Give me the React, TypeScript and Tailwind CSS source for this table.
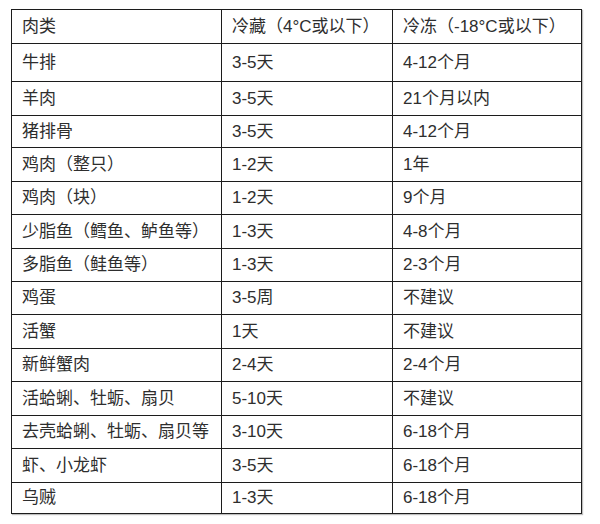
const ROWS = [
  { name: "牛排", chill: "3-5天", freeze: "4-12个月", h: "h-[38px]" },
  { name: "羊肉", chill: "3-5天", freeze: "21个月以内", h: "h-[34px]" },
  { name: "猪排骨", chill: "3-5天", freeze: "4-12个月", h: "h-[32px]" },
  { name: "鸡肉（整只）", chill: "1-2天", freeze: "1年", h: "h-[34px]" },
  { name: "鸡肉（块）", chill: "1-2天", freeze: "9个月", h: "h-[33px]" },
  { name: "少脂鱼（鳕鱼、鲈鱼等）", chill: "1-3天", freeze: "4-8个月", h: "h-[34px]" },
  { name: "多脂鱼（鲑鱼等）", chill: "1-3天", freeze: "2-3个月", h: "h-[33px]" },
  { name: "鸡蛋", chill: "3-5周", freeze: "不建议", h: "h-[33px]" },
  { name: "活蟹", chill: "1天", freeze: "不建议", h: "h-[34px]" },
  { name: "新鲜蟹肉", chill: "2-4天", freeze: "2-4个月", h: "h-[33px]" },
  { name: "活蛤蜊、牡蛎、扇贝", chill: "5-10天", freeze: "不建议", h: "h-[34px]" },
  { name: "去壳蛤蜊、牡蛎、扇贝等", chill: "3-10天", freeze: "6-18个月", h: "h-[33px]" },
  { name: "虾、小龙虾", chill: "3-5天", freeze: "6-18个月", h: "h-[34px]" },
  { name: "乌贼", chill: "1-3天", freeze: "6-18个月", h: "h-[31px]" },
];

const cell = "border-[1.5px] border-[#1c1c1c] px-[10px] py-0 text-left font-normal align-middle whitespace-nowrap";

export default function App() {
  return (
    <div className="w-[600px] h-[524px] bg-white pt-[9px] pl-[11px] font-['Liberation_Sans','Noto_Sans_CJK_SC',sans-serif] text-[17px] text-[#2e2e2e]">
      <table className="border-collapse table-fixed w-[570px] shadow-[1px_1px_1px_rgba(0,0,0,0.25)]">
        <colgroup>
          <col className="w-[210px]" />
          <col className="w-[171px]" />
          <col className="w-[189px]" />
        </colgroup>
        <thead>
          <tr className="h-[34px]">
            <th className={cell}>肉类</th>
            <th className={cell}>冷藏（4°C或以下）</th>
            <th className={cell}>冷冻（-18°C或以下）</th>
          </tr>
        </thead>
        <tbody>
          {ROWS.map((r) => (
            <tr key={r.name} className={r.h}>
              <td className={cell}>{r.name}</td>
              <td className={cell}>{r.chill}</td>
              <td className={cell}>{r.freeze}</td>
            </tr>
          ))}
        </tbody>
      </table>
    </div>
  );
}
